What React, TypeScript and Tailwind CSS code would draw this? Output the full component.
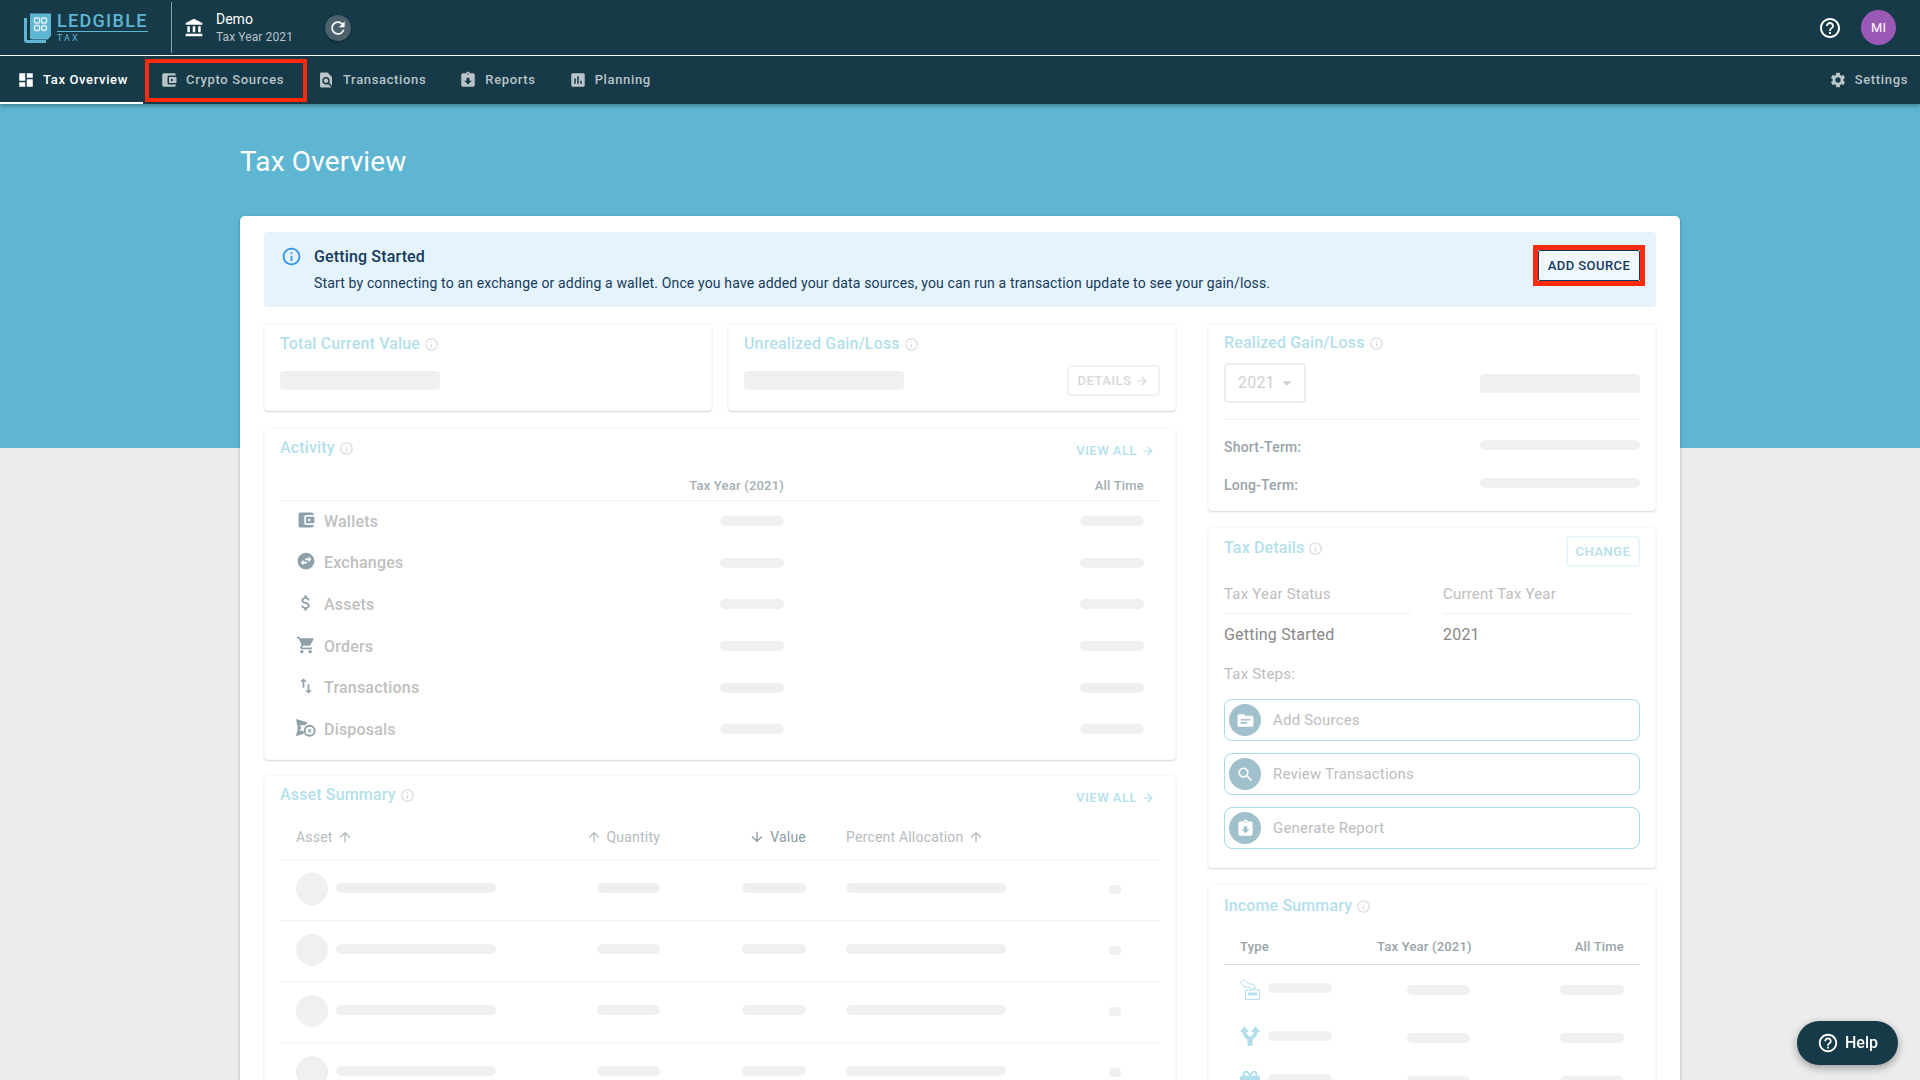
import React from "react";
import {
  MdDashboard, MdAccountBalanceWallet, MdFindInPage, MdAssignmentReturned, MdAssessment, MdSettings,
  MdAccountBalance, MdRefresh, MdHelpOutline, MdInfoOutline, MdArrowForward, MdArrowUpward, MdArrowDownward,
  MdShoppingCart, MdAttachMoney, MdImportExport, MdSwapHorizontalCircle, MdTopic, MdSearch, MdArrowDropDown,
} from "react-icons/md";
import { FaGift } from "react-icons/fa";

const Sk = ({ className }: { className: string }) => <div className={`bg-[#f0f0f0] rounded-[4px] ${className}`} />;

const Info = () => <MdInfoOutline className="text-[#dcdcdc] text-[15px] ml-[4px]" />;

const Title = ({ children }: { children: React.ReactNode }) => (
  <div className="flex items-center text-[16px] font-medium leading-[20px] tracking-[0.15px] text-[#b3dfec]">
    {children}
    <Info />
  </div>
);

const Card = ({ className, children }: { className?: string; children: React.ReactNode }) => (
  <div className={`bg-white rounded-[4px] border border-[#f9f9f9] shadow-[0_1px_2px_rgba(0,0,0,0.16)] ${className ?? ""}`}>{children}</div>
);

const ViewAll = () => (
  <div className="flex items-center gap-[4px] text-[13px] leading-[20px] font-medium tracking-[0.5px] text-[#b3dfec]">
    VIEW ALL <MdArrowForward className="text-[14px]" />
  </div>
);

const Tab = ({ icon, label, active, className }: { icon: React.ReactNode; label: string; active?: boolean; className: string }) => (
  <div
    className={`h-[48px] flex items-center gap-[8px] text-[13px] font-medium tracking-[0.65px] border-b-[2px] pt-[2px] ${
      active ? "border-white text-white" : "border-transparent text-[#b9c3c8]"
    } ${className}`}
  >
    <span className="text-[18px] flex">{icon}</span>
    {label}
  </div>
);

const activity: [React.ReactNode, string][] = [
  [<MdAccountBalanceWallet />, "Wallets"],
  [<MdSwapHorizontalCircle />, "Exchanges"],
  [<MdAttachMoney />, "Assets"],
  [<MdShoppingCart />, "Orders"],
  [<MdImportExport />, "Transactions"],
  [
    <svg viewBox="0 0 22 20" width="22" height="20" fill="currentColor">
      <path d="M0 0l13 4-3 3H4l2 3-2 3h4l1 3-9 3 2-9z" />
      <circle cx="15" cy="13" r="5.5" fill="none" stroke="currentColor" strokeWidth="2" />
      <path d="M13.300 11.300l3.400 3.400M16.700 11.300l-3.400 3.400" stroke="currentColor" strokeWidth="1.200" />
    </svg>,
    "Disposals",
  ],
];

const steps: [React.ReactNode, string][] = [
  [<MdTopic />, "Add Sources"],
  [<MdSearch />, "Review Transactions"],
  [<MdAssignmentReturned />, "Generate Report"],
];

const Logo = () => (
  <div className="flex items-center gap-[6px] w-[123px]">
    <svg viewBox="0 0 27 30" width="27" height="30" className="shrink-0">
      <path d="M1.500 5v22a1.500 1.500 0 0 0 1.500 1.500h19" fill="none" stroke="#5eb6d2" strokeWidth="3" />
      <path d="M6 0.500h21v22l-3 4H8a2 2 0 0 1-2-2z" fill="#5eb6d2" />
      <rect x="10.500" y="5" width="5" height="5" rx="1" fill="none" stroke="#dff1f7" strokeWidth="1.400" />
      <rect x="17.500" y="5" width="5" height="5" rx="1" fill="none" stroke="#dff1f7" strokeWidth="1.400" />
      <rect x="10.500" y="12.500" width="5" height="5" rx="1" fill="none" stroke="#dff1f7" strokeWidth="1.400" />
      <rect x="17.500" y="12.500" width="5" height="5" rx="2.500" fill="none" stroke="#dff1f7" strokeWidth="1.400" />
    </svg>
    <div className="flex flex-col">
      <span className="text-[18px] leading-[20px] font-medium tracking-[1.3px] text-[#5eb6d2] border-b border-[#5eb6d2] whitespace-nowrap">LEDGIBLE</span>
      <span className="text-[9px] leading-[11px] mt-[1px] tracking-[2px] text-[#5eb6d2]">TAX</span>
    </div>
  </div>
);

export default function App() {
  return (
    <div className="h-screen overflow-hidden bg-[#ececec] font-['Roboto',sans-serif] flex flex-col">
      <div className="bg-[#163a48] shrink-0 relative z-10 shadow-[0_2px_4px_rgba(0,0,0,0.3)]">
        <div className="h-[56px] flex items-center border-b border-white pl-[24px] pr-[24px]">
          <Logo />
          <div className="w-[1px] h-[51px] bg-[#8a9ca4] ml-[24px]" />
          <MdAccountBalance className="text-white text-[20px] ml-[12px]" />
          <div className="ml-[12px] flex flex-col">
            <span className="text-[14px] leading-[18px] text-white">Demo</span>
            <span className="text-[12px] leading-[18px] tracking-[0.1px] text-[#b9c3c8]">Tax Year 2021</span>
          </div>
          <div className="ml-[32px] w-[26px] h-[26px] rounded-full bg-[#4b626d] flex items-center justify-center shadow-[0_1px_3px_rgba(0,0,0,0.4)]">
            <MdRefresh className="text-white text-[20px]" />
          </div>
          <div className="ml-auto flex items-center">
            <MdHelpOutline className="text-white text-[24px]" />
            <div className="ml-[19px] w-[35px] h-[35px] rounded-full bg-[#9b59b6] flex items-center justify-center text-[13px] text-white">MI</div>
          </div>
        </div>
        <div className="h-[48px] flex items-center">
          <Tab icon={<MdDashboard />} label="Tax Overview" active className="w-[143px] pl-[17px]" />
          <div className="ml-[2px] h-[43px] w-[162px] border-[4px] border-[#ff2a0c] flex items-center pl-[11px] overflow-hidden">
            <Tab icon={<MdAccountBalanceWallet />} label="Crypto Sources" className="" />
          </div>
          <Tab icon={<MdFindInPage />} label="Transactions" className="ml-[10px]" />
          <Tab icon={<MdAssignmentReturned />} label="Reports" className="ml-[33px]" />
          <Tab icon={<MdAssessment />} label="Planning" className="ml-[33px]" />
          <div className="ml-auto pr-[12px]">
            <Tab icon={<MdSettings />} label="Settings" className="" />
          </div>
        </div>
      </div>

      <div className="h-[344px] shrink-0 bg-[#5eb6d2] pl-[240px] pt-[41px]">
        <h1 className="text-[28px] leading-[34px] font-normal tracking-[0.15px] text-white">Tax Overview</h1>
      </div>

      <div className="-mt-[232px] relative mx-auto w-[1440px] flex-1 min-h-0 overflow-hidden bg-white rounded-t-[5px] shadow-[0_1px_3px_rgba(0,0,0,0.3)] px-[24px] pt-[16px]">
        <div className="h-[75px] rounded-[4px] bg-[#e5f3fd] flex items-start pl-[17px] pr-[11px]">
          <MdInfoOutline className="text-[#2f93f0] text-[21px] mt-[14px]" />
          <div className="ml-[12px] text-[#163a5a] pt-[15px]">
            <div className="text-[16px] leading-[19px] font-medium tracking-[0.15px]">Getting Started</div>
            <div className="text-[14px] leading-[20px] tracking-[0.15px] mt-[7px]">
              Start by connecting to an exchange or adding a wallet. Once you have added your data sources, you can run a transaction update to see your gain/loss.
            </div>
          </div>
          <div className="ml-auto mt-[13px] border-[5px] border-[#ff2a0c] w-[112px] h-[41px]">
            <div className="h-full rounded-[2px] bg-[#f0f8fe] border border-[#163a5a] flex items-center justify-center text-[13px] font-medium tracking-[0.45px] text-[#163a5a]">
              ADD SOURCE
            </div>
          </div>
        </div>

        <div className="mt-[16px] grid grid-cols-[912px_448px] gap-x-[32px] items-start">
          <div className="flex flex-col">
            <div className="grid grid-cols-2 gap-[16px]">
              <Card className="h-[88px] px-[15px] pt-[10px]">
                <Title>Total Current Value</Title>
                <Sk className="w-[160px] h-[19px] mt-[17px]" />
              </Card>
              <Card className="h-[88px] px-[15px] pt-[10px] relative">
                <Title>Unrealized Gain/Loss</Title>
                <div className="flex items-start justify-between mt-[11px]">
                  <Sk className="w-[160px] h-[19px] mt-[6px]" />
                  <div className="flex items-center justify-center gap-[4px] w-[93px] h-[31px] border-2 border-[#f2f2f2] rounded-[4px] text-[13px] font-medium tracking-[0.5px] text-[#d8d8d8]">
                    DETAILS <MdArrowForward className="text-[14px]" />
                  </div>
                </div>
              </Card>
            </div>

            <Card className="h-[332px] mt-[17px] px-[15px] pt-[9px]">
              <div className="flex justify-between items-start h-[23px]">
                <Title>Activity</Title>
                <div className="pt-[3px] pr-[5px]"><ViewAll /></div>
              </div>
              <div className="mt-[15px] h-[25px] border-b border-[#eeeeee] text-[13px] leading-[19px] font-medium tracking-[0.2px] text-[#a3aeb3]">
                <div className="flex">
                  <span className="w-[504px] text-right">Tax Year (2021)</span>
                  <span className="w-[360px] text-right">All Time</span>
                </div>
              </div>
              <div className="flex flex-col">
                {activity.map(([icon, label]) => (
                  <div key={label} className="h-[41.6px] flex items-center pl-[16px]">
                    <span className="w-[20px] flex justify-center text-[20px] text-[#8ea0a8] -mt-[4px]">{icon}</span>
                    <span className="ml-[8px] w-[396px] text-[16px] font-medium tracking-[0.2px] text-[#c0c0c0]">{label}</span>
                    <Sk className="w-[64px] h-[10px] rounded-[5px] -mt-[1px]" />
                    <Sk className="w-[64px] h-[10px] ml-[296px] rounded-[5px] -mt-[1px]" />
                  </div>
                ))}
              </div>
            </Card>

            <Card className="h-[320px] mt-[15px] px-[15px] pt-[9px]">
              <div className="flex justify-between items-start h-[23px]">
                <Title>Asset Summary</Title>
                <div className="pt-[3px] pr-[5px]"><ViewAll /></div>
              </div>
              <div className="mt-[20px] mb-[13px] h-[18px] flex text-[14px] leading-[18px] tracking-[0.2px] text-[#b4bcc0]">
                <span className="ml-[16px] w-[264px] flex items-center gap-[4px]">Asset <MdArrowUpward className="text-[16px]" /></span>
                <span className="w-[100px] flex items-center justify-end gap-[5px]"><MdArrowUpward className="text-[16px]" /> Quantity</span>
                <span className="w-[146px] flex items-center justify-end gap-[5px] text-[#8a9ca4]"><MdArrowDownward className="text-[16px]" /> Value</span>
                <span className="ml-[40px] flex items-center gap-[4px]">Percent Allocation <MdArrowUpward className="text-[16px]" /></span>
              </div>
              {[0, 1, 2, 3].map((i) => (
                <div key={i} className="h-[61px] border-t-2 border-[#f6f6f6] flex items-center pl-[16px] pb-[3px]">
                  <div className="w-[32px] h-[32px] rounded-full bg-[#f0f0f0]" />
                  <Sk className="ml-[8px] w-[160px] h-[10px] rounded-[5px] -mt-[2px]" />
                  <Sk className="ml-[101px] w-[63px] h-[10px] rounded-[5px] -mt-[2px]" />
                  <Sk className="ml-[82px] w-[64px] h-[10px] rounded-[5px] -mt-[2px]" />
                  <Sk className="ml-[40px] w-[160px] h-[10px] rounded-[5px] -mt-[2px]" />
                  <Sk className="ml-[103px] w-[12px] h-[9px] rounded-[3px]" />
                </div>
              ))}
            </Card>
          </div>

          <div className="flex flex-col gap-[16px]">
            <Card className="h-[188px] px-[15px] pt-[9px]">
              <Title>Realized Gain/Loss</Title>
              <div className="flex items-center justify-between mt-[10px]">
                <div className="w-[82px] h-[40px] border-2 border-[#eeeeee] rounded-[4px] flex items-center pl-[12px] text-[16px] tracking-[0.2px] text-[#d0d0d0]">
                  2021 <MdArrowDropDown className="text-[22px] ml-[1px]" />
                </div>
                <Sk className="w-[160px] h-[19px] mt-[1px]" />
              </div>
              <div className="mt-[16px] border-t border-[#f0f0f0]" />
              <div className="flex items-center justify-between h-[38px] mt-[8px] text-[14px] font-medium tracking-[0.2px] text-[#98a4a9]">
                Short-Term: <Sk className="w-[160px] h-[10px] rounded-[5px] -mt-[4px]" />
              </div>
              <div className="flex items-center justify-between h-[38px] text-[14px] font-medium tracking-[0.2px] text-[#98a4a9]">
                Long-Term: <Sk className="w-[160px] h-[10px] rounded-[5px] -mt-[4px]" />
              </div>
            </Card>

            <Card className="h-[341px] px-[15px] pt-[9px]">
              <div className="flex justify-between items-start h-[30px]">
                <div className="mt-[1px]"><Title>Tax Details</Title></div>
                <div className="-mt-[1px] w-[74px] h-[31px] border-2 border-[#e9f6fa] rounded-[4px] flex items-center justify-center text-[13px] font-medium tracking-[0.5px] text-[#b3dfec]">
                  CHANGE
                </div>
              </div>
              <div className="grid grid-cols-[187px_187px] gap-x-[32px] mt-[10px]">
                <div className="text-[15px] leading-[35px] tracking-[0.2px] text-[#bdbdbd] border-b border-[#f0f0f0] h-[37px]">Tax Year Status</div>
                <div className="text-[15px] leading-[35px] tracking-[0.2px] text-[#bdbdbd] border-b border-[#f0f0f0] h-[37px]">Current Tax Year</div>
                <div className="text-[16px] leading-[42px] tracking-[0.2px] text-[#888888]">Getting Started</div>
                <div className="text-[16px] leading-[42px] tracking-[0.2px] text-[#888888]">2021</div>
              </div>
              <div className="text-[15px] leading-[36px] tracking-[0.2px] text-[#bdbdbd]">Tax Steps:</div>
              <div className="flex flex-col gap-[12px] mt-[7px]">
                {steps.map(([icon, label]) => (
                  <div key={label} className="h-[42px] border border-[#aadbe9] rounded-[8px] flex items-center pl-[4px]">
                    <span className="w-[32px] h-[32px] rounded-full bg-[#a0c0cc] flex items-center justify-center text-white text-[19px]">{icon}</span>
                    <span className="ml-[12px] text-[15px] tracking-[0.2px] text-[#bdbdbd]">{label}</span>
                  </div>
                ))}
              </div>
            </Card>

            <Card className="h-[260px] px-[15px] pt-[11px]">
              <Title>Income Summary</Title>
              <div className="mt-[21px] h-[28px] border-b border-[#dddddd] flex text-[13px] leading-[19px] font-medium tracking-[0.2px] text-[#98a4a9] pl-[16px]">
                <span className="w-[137px]">Type</span>
                <span className="w-[93px] whitespace-nowrap">Tax Year (2021)</span>
                <span className="w-[154px] text-right">All Time</span>
              </div>
              {[
                <svg viewBox="0 0 20 21" width="20" height="21" fill="none" stroke="currentColor" strokeWidth="1">
                  <path d="M0.500 3l3-2.500 5 4 5 1 2 4-4 0.500-3-2H4z" />
                  <path d="M5.500 11H19.500V20.500H5.500z" />
                  <path d="M8 15h9" strokeWidth="3" />
                </svg>,
                <svg viewBox="0 0 20 20" width="20" height="20" fill="currentColor">
                  <path d="M0 6l4.500-6L9 6H6.500c0 2 1.500 3.500 3.500 4.500 2-1 3.500-2.500 3.500-4.500H11l4.500-6L20 6h-2.500c0 3.500-2.500 6-5 7.500V20h-5v-6.500c-2.500-1.500-5-4-5-7.500z" />
                </svg>,
                <FaGift />,
              ].map((icon, i) => (
                <div key={i} className={`flex items-center pl-[16px] ${i === 0 ? "h-[49px]" : i === 1 ? "h-[47px]" : "h-[40px]"}`}>
                  <span className={`w-[20px] flex justify-center text-[21px] text-[#b3dfec] ${i === 0 ? "" : "-mt-[3px]"}`}>{icon}</span>
                  <Sk className="ml-[8px] w-[64px] h-[10px] rounded-[5px] -mt-[4px]" />
                  <Sk className="ml-[75px] w-[63px] h-[10px] rounded-[5px]" />
                  <Sk className="ml-[90px] w-[64px] h-[10px] rounded-[5px]" />
                </div>
              ))}
            </Card>
          </div>
        </div>
      </div>

      <div className="fixed left-[1797px] top-[1021px] w-[101px] h-[44px] rounded-full bg-[#163a48] flex items-center justify-center gap-[6px] text-white text-[16px] font-medium shadow-[0_3px_8px_rgba(0,0,0,0.35)]">
        <MdHelpOutline className="text-[22px]" /> Help
      </div>
    </div>
  );
}
